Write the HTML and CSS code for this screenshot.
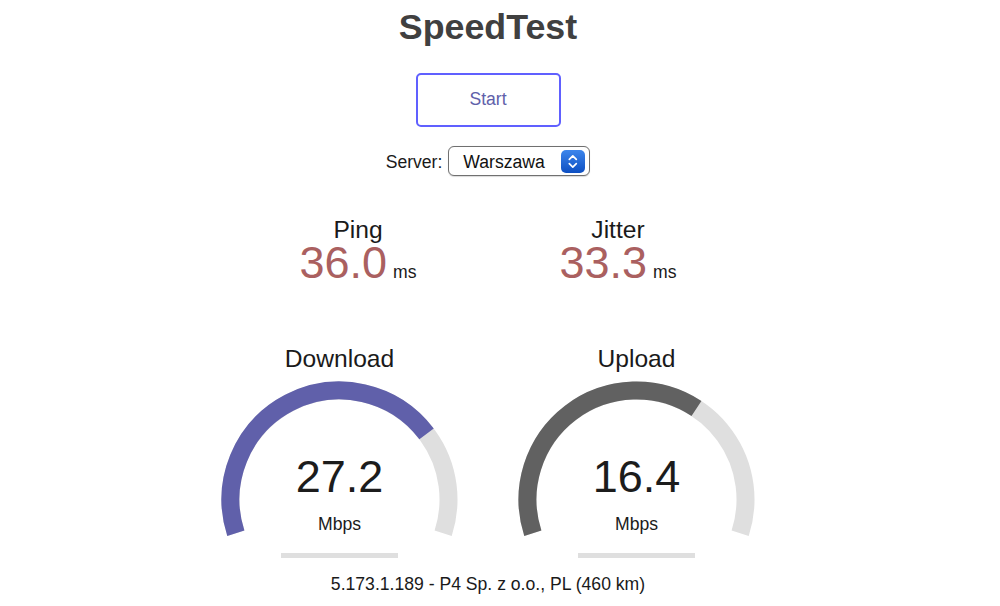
FILE: index.html
```html
<!DOCTYPE html>
<html lang="en">
<head>
<meta charset="utf-8">
<title>SpeedTest</title>
<link rel="stylesheet" href="styles.css">
</head>
<body>
<div class="page">
  <h1 class="title">SpeedTest</h1>
  <div class="start-btn">Start</div>
  <div class="server-row">
    <span class="server-label">Server:</span>
    <div class="select">
      <span class="select-value">Warszawa</span>
      <svg class="stepper" width="24" height="23" viewBox="0 0 24 23">
        <defs>
          <linearGradient id="stepGrad" x1="0" y1="0" x2="0" y2="1">
            <stop offset="0" stop-color="#3d86ec"/>
            <stop offset="1" stop-color="#0d4fc2"/>
          </linearGradient>
        </defs>
        <rect x="0" y="0" width="24" height="23" rx="5" fill="url(#stepGrad)"/>
        <path d="M8.3 9.3 L11.8 5.9 L15.3 9.3" fill="none" stroke="#fff" stroke-width="1.7" stroke-linecap="round" stroke-linejoin="round"/>
        <path d="M8.3 13.7 L11.8 17.1 L15.3 13.7" fill="none" stroke="#fff" stroke-width="1.7" stroke-linecap="round" stroke-linejoin="round"/>
      </svg>
    </div>
  </div>

  <div class="metrics">
    <div class="metric">
      <div class="metric-name">Ping</div>
      <div class="metric-line"><span class="metric-value">36.0</span><span class="metric-unit">ms</span></div>
    </div>
    <div class="metric">
      <div class="metric-name">Jitter</div>
      <div class="metric-line"><span class="metric-value">33.3</span><span class="metric-unit">ms</span></div>
    </div>
  </div>

  <div class="gauges">
    <div class="gauge">
      <div class="gauge-name">Download</div>
      <div class="gauge-body">
        <svg class="gauge-arc" width="297" height="170" viewBox="0 0 297 170">
          <path d="M44.835 160.183 A109 109 0 1 1 252.165 160.183" fill="none" stroke="#dfdfdf" stroke-width="18"/>
          <path d="M44.835 160.183 A109 109 0 0 1 235.556 60.908" fill="none" stroke="#6060aa" stroke-width="18"/>
        </svg>
        <div class="readout">
          <div class="gauge-value">27.2</div>
          <div class="gauge-unit">Mbps</div>
        </div>
      </div>
      <div class="progress"></div>
    </div>
    <div class="gauge">
      <div class="gauge-name">Upload</div>
      <div class="gauge-body">
        <svg class="gauge-arc" width="297" height="170" viewBox="0 0 297 170">
          <path d="M44.835 160.183 A109 109 0 1 1 252.165 160.183" fill="none" stroke="#dfdfdf" stroke-width="18"/>
          <path d="M44.835 160.183 A109 109 0 0 1 208.461 35.474" fill="none" stroke="#616161" stroke-width="18"/>
        </svg>
        <div class="readout">
          <div class="gauge-value">16.4</div>
          <div class="gauge-unit">Mbps</div>
        </div>
      </div>
      <div class="progress"></div>
    </div>
  </div>

  <div class="ip-info">5.173.1.189 - P4 Sp. z o.o., PL (460 km)</div>
</div>
</body>
</html>
```

FILE: styles.css
```css
html, body {
  margin: 0;
  padding: 0;
  background: #ffffff;
}

body {
  font-family: "Liberation Sans", Arial, Helvetica, sans-serif;
  font-size: 17.6px;
  color: #202020;
  overflow: hidden;
}

.page {
  width: 976px;
  padding-top: 7px;
  display: flex;
  flex-direction: column;
  align-items: center;
  text-align: center;
}

.title {
  margin: 0;
  font-size: 35.8px;
  line-height: 40px;
  font-weight: bold;
  color: #404040;
}

.start-btn {
  margin-top: 26px;
  box-sizing: border-box;
  width: 145px;
  height: 54px;
  border: 2.6px solid #6060ff;
  border-radius: 5px;
  color: #6060aa;
  font-size: 17.6px;
  display: flex;
  align-items: center;
  justify-content: center;
  padding-bottom: 2px;
}

.server-row {
  margin-top: 19px;
  display: flex;
  align-items: center;
  gap: 6px;
  height: 30px;
}

.server-label {
  font-size: 17.6px;
  line-height: 20px;
  color: #1a1a1a;
  padding-top: 1px;
}

.select {
  box-sizing: border-box;
  width: 142px;
  height: 30px;
  border: 1px solid #707070;
  border-radius: 6px;
  background: #fff;
  display: flex;
  align-items: center;
  justify-content: space-between;
  padding: 0 4px 0 14px;
  box-shadow: 0 0.5px 1px rgba(0, 0, 0, 0.15);
}

.select-value {
  font-size: 17.6px;
  line-height: 20px;
  color: #111;
  padding-top: 1px;
}

.stepper {
  display: block;
}

.metrics {
  margin-top: 39.7px;
  display: flex;
  justify-content: center;
}

.metric {
  width: 260px;
  display: flex;
  flex-direction: column;
  align-items: center;
}

.metric-name {
  font-size: 24.6px;
  line-height: 27.6px;
  color: #1a1a1a;
}

.metric-line {
  height: 39.5px;
  line-height: 39.5px;
  white-space: nowrap;
}

.metric-value {
  display: inline-block;
  height: 39.5px;
  line-height: 39.5px;
  font-size: 45px;
  color: #aa6060;
}

.metric-unit {
  font-size: 17.6px;
  color: #1a1a1a;
  margin-left: 6px;
}

.gauges {
  margin-top: 62px;
  display: flex;
  justify-content: center;
}

.gauge {
  width: 297px;
  display: flex;
  flex-direction: column;
  align-items: center;
}

.gauge-name {
  font-size: 24.6px;
  line-height: 28px;
  color: #1a1a1a;
}

.gauge-body {
  display: grid;
  width: 297px;
  height: 170px;
}

.gauge-arc {
  grid-area: 1 / 1;
  display: block;
}

.readout {
  grid-area: 1 / 1;
  padding-top: 84px;
  display: flex;
  flex-direction: column;
  align-items: center;
}

.gauge-value {
  font-size: 45px;
  line-height: 40px;
  color: #1c1c1c;
}

.gauge-unit {
  margin-top: 17.4px;
  font-size: 17.6px;
  line-height: 20px;
  color: #1a1a1a;
}

.progress {
  margin-top: 10.5px;
  width: 117px;
  height: 4.4px;
  background: #dfdfdf;
}

.ip-info {
  margin-top: 16.5px;
  font-size: 17.6px;
  line-height: 20px;
  color: #1a1a1a;
}
```
